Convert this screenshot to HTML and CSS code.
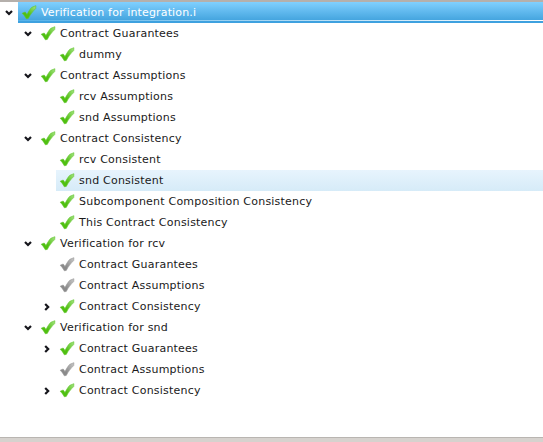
FILE: index.html
```html
<!DOCTYPE html>
<html lang="en">
<head>
<meta charset="utf-8">
<title>Verification results</title>
<link rel="stylesheet" href="styles.css">
</head>
<body>
<svg class="defs" aria-hidden="true">
  <defs>
    <linearGradient id="green" x1="0" y1="1" x2="1" y2="0"><stop offset=".4" stop-color="#4fc010"/><stop offset="1" stop-color="#a5e383"/></linearGradient>
    <linearGradient id="gray" x1="0" y1="1" x2="1" y2="0"><stop offset=".35" stop-color="#8a8a8a"/><stop offset="1" stop-color="#c8c8c8"/></linearGradient>
    <symbol id="check" viewBox="0 0 16 16"><path d="M1.2 8.2 4.2 7 6 9.4C7.7 6.3 9.2 3.9 10.8 2.3L14.9 .7 14.7 3.6C11.8 6.2 9.2 9.8 7.3 13.4L5.3 13.8C4.2 11.7 3 9.9 1.2 8.2Z" stroke-width=".6" stroke-linejoin="round"/></symbol>
    <symbol id="down" viewBox="0 0 8 8"><path d="M1 2 4 5 7 2" fill="none" stroke="#16161c" stroke-width="2.2"/></symbol>
    <symbol id="right" viewBox="0 0 8 8"><path d="M2.2 1 5.2 4 2.2 7" fill="none" stroke="#16161c" stroke-width="2.2"/></symbol>
  </defs>
</svg>
<main class="panel">
  <ul class="tree" id="tree"></ul>
</main>
<script src="tree.js"></script>
</body>
</html>
```
FILE: styles.css
```css
* { box-sizing: border-box; }
body {
  margin: 0;
  background: #d6d2ce;
  font: 11px/21px "DejaVu Sans", sans-serif;
  letter-spacing: .22px;
  color: #1a1a1a;
}
.defs { display: block; width: 0; height: 0; }
.panel {
  height: 438px;
  border-top: 2px solid #b5b0ac;
  border-bottom: 1px solid #b9b5b1;
  background: #fff;
}
.tree { list-style: none; margin: 0; padding: 0; }
.row { display: flex; height: 21px; }
.level-1 { padding-left: 19px; }
.level-2 { padding-left: 38px; }
.toggle { width: 18px; flex: none; display: flex; align-items: center; padding-left: 5px; }
.toggle svg { width: 8px; height: 8px; }
.item { flex: 1; display: flex; align-items: center; padding-left: 3px; white-space: pre; }
.check { width: 16px; height: 16px; margin-right: 4px; fill: url(#green); stroke: #5fc42c; }
.check.gray { fill: url(#gray); stroke: #969696; }
.selected { letter-spacing: .14px; }
.selected .item {
  color: #fff;
  background:
    linear-gradient(90deg, #55b2e9, #fff) 0 18px / 100% 1px no-repeat,
    linear-gradient(#80d0ff, #45a5df 18px, #3ea1df 18px);
}
.hover .item { background: linear-gradient(#e7f4fd, #d6ebf8); }
```
FILE: tree.js
```js
const rows = [
  [0, "down", "green", "Verification for integration.i", "selected"],
  [1, "down", "green", "Contract Guarantees"],
  [2, "", "green", "dummy"],
  [1, "down", "green", "Contract Assumptions"],
  [2, "", "green", "rcv Assumptions"],
  [2, "", "green", "snd Assumptions"],
  [1, "down", "green", "Contract Consistency"],
  [2, "", "green", "rcv Consistent"],
  [2, "", "green", "snd Consistent", "hover"],
  [2, "", "green", "Subcomponent Composition Consistency"],
  [2, "", "green", "This Contract Consistency"],
  [1, "down", "green", "Verification for rcv"],
  [2, "", "gray", "Contract Guarantees"],
  [2, "", "gray", "Contract Assumptions"],
  [2, "right", "green", "Contract Consistency"],
  [1, "down", "green", "Verification for snd"],
  [2, "right", "green", "Contract Guarantees"],
  [2, "", "gray", "Contract Assumptions"],
  [2, "right", "green", "Contract Consistency"]
];
document.getElementById("tree").innerHTML = rows.map(([level, toggle, color, label, state = ""]) =>
  `<li class="row level-${level} ${state}"><span class="toggle">${toggle ? `<svg><use href="#${toggle}"/></svg>` : ""}</span><span class="item"><svg class="check ${color}"><use href="#check"/></svg><span class="label">${label}</span></span></li>`
).join("");
```
